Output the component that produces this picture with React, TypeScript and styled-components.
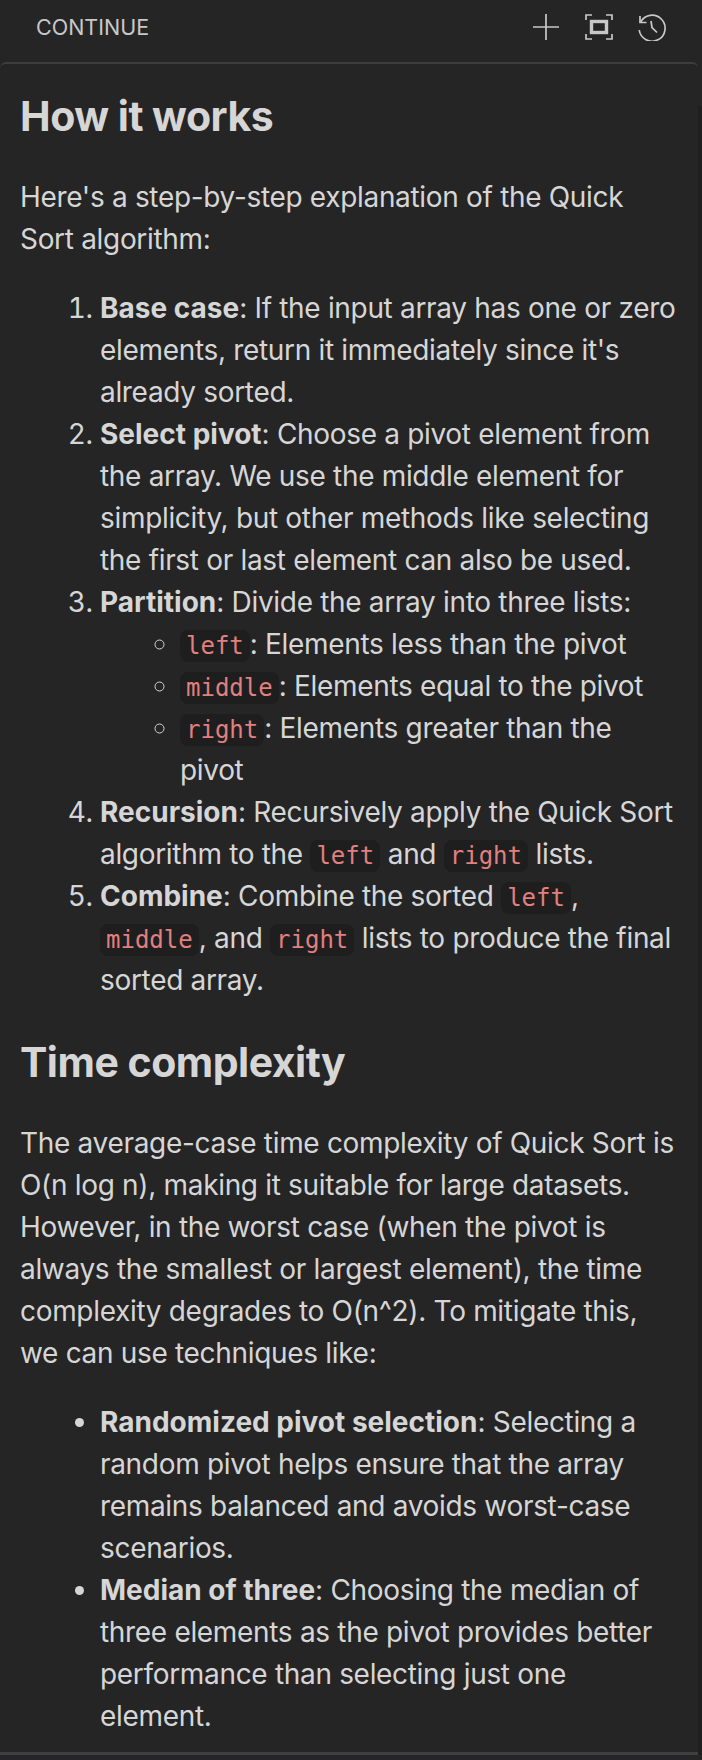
import React from 'react';
import styled, { createGlobalStyle } from 'styled-components';

const GlobalStyle = createGlobalStyle`
	html, body {
		margin: 0;
		padding: 0;
		background: #252526;
	}
`;

const Page = styled.div`
	width: 702px;
	height: 1760px;
	overflow: hidden;
	background: #252526;
	color: #d6d6d6;
	font-family: Inter, 'Liberation Sans', sans-serif;
	font-size: 28px;
	line-height: 42px;
	letter-spacing: -0.32px;

	strong {
		letter-spacing: 0;
	}
`;

const TitleBar = styled.header`
	height: 62px;
	box-sizing: border-box;
	padding: 0 36px 8px 36px;
	display: flex;
	align-items: center;
	justify-content: space-between;
`;

const TitleText = styled.span`
	font-size: 21.5px;
	line-height: 24px;
	letter-spacing: 0;
	color: #c8c8c8;
`;

const Actions = styled.div`
	display: flex;
	align-items: center;
	gap: 25px;
`;

const IconButton = styled.svg`
	width: 28px;
	height: 28px;
	display: block;
	fill: none;
	stroke: #c8c8c8;
	stroke-width: 1.7;
`;

const Body = styled.div`
	display: flex;
`;

const Panel = styled.main`
	flex: 1;
	height: 1693px;
	box-sizing: border-box;
	padding: 0 20px;
	border-top: 2px solid #3d3d3e;
	border-bottom: 3px solid #3f3f42;
	border-top-left-radius: 6px;
	border-top-right-radius: 6px;
`;

const ScrollGutter = styled.div`
	width: 4px;
	margin-top: 44px;
	background: #1f1f20;
`;

const Heading = styled.h2<{ $top: number }>`
	margin: ${({ $top }) => $top}px 0 0;
	font-size: 41px;
	line-height: 52px;
	font-weight: 700;
	letter-spacing: -0.5px;
`;

const Paragraph = styled.p`
	margin: 34px 0 0;
`;

const List = styled.ol`
	margin: 27px 0 0;
	padding: 0 0 0 80px;
`;

const BulletList = styled.ul`
	margin: 27px 0 0;
	padding: 0 0 0 80px;
	list-style: disc;
`;

const SubList = styled.ul`
	margin: 0;
	padding: 0 0 0 80px;
	list-style: circle;
`;

const Code = styled.code`
	font-family: 'DejaVu Sans Mono', 'Liberation Mono', monospace;
	font-size: 24px;
	line-height: 28px;
	letter-spacing: 0;
	color: #e27f7f;
	background: #1e1e1e;
	border-radius: 8px;
	padding: 2px 6px;
`;

export default function App() {
	return (
		<Page>
			<GlobalStyle />
			<TitleBar>
				<TitleText>CONTINUE</TitleText>
				<Actions>
					<IconButton viewBox="0 0 28 28">
						<path d="M14 1v26M1 14h26" />
					</IconButton>
					<IconButton viewBox="0 0 28 28">
						<path d="M1 7V2h6M21 2h6v5M27 21v5h-6M7 26H1v-5" />
						<rect x="6.5" y="8.5" width="15" height="11" strokeWidth="3.4" />
					</IconButton>
					<IconButton viewBox="0 0 28 28">
						<path d="M2 3v6.5h6.5" />
						<path d="M2.4 9.5A13 13 0 1 1 1.2 17" />
						<path d="M13 8l1 6.5 5 5" />
					</IconButton>
				</Actions>
			</TitleBar>
			<Body>
				<Panel>
					<Heading $top={26}>How it works</Heading>
					<Paragraph>Here's a step-by-step explanation of the Quick Sort algorithm:</Paragraph>
					<List>
						<li>
							<strong>Base case</strong>: If the input array has one or zero elements, return it immediately since it's
							already sorted.
						</li>
						<li>
							<strong>Select pivot</strong>: Choose a pivot element from the array. We use the middle element for
							simplicity, but other methods like selecting the first or last element can also be used.
						</li>
						<li>
							<strong>Partition</strong>: Divide the array into three lists:
							<SubList>
								<li>
									<Code>left</Code>: Elements less than the pivot
								</li>
								<li>
									<Code>middle</Code>: Elements equal to the pivot
								</li>
								<li>
									<Code>right</Code>: Elements greater than the pivot
								</li>
							</SubList>
						</li>
						<li>
							<strong>Recursion</strong>: Recursively apply the Quick Sort algorithm to the <Code>left</Code> and{' '}
							<Code>right</Code> lists.
						</li>
						<li>
							<strong>Combine</strong>: Combine the sorted <Code>left</Code>, <Code>middle</Code>, and{' '}
							<Code>right</Code> lists to produce the final sorted array.
						</li>
					</List>
					<Heading $top={35}>Time complexity</Heading>
					<Paragraph>
						The average-case time complexity of Quick Sort is O(n log n), making it suitable for large datasets.
						However, in the worst case (when the pivot is always the smallest or largest element), the time complexity
						degrades to O(n^2). To mitigate this, we can use techniques like:
					</Paragraph>
					<BulletList>
						<li>
							<strong>Randomized pivot selection</strong>: Selecting a random pivot helps ensure that the array remains
							balanced and avoids worst-case scenarios.
						</li>
						<li>
							<strong>Median of three</strong>: Choosing the median of three elements as the pivot provides better
							performance than selecting just one element.
						</li>
					</BulletList>
				</Panel>
				<ScrollGutter />
			</Body>
		</Page>
	);
}
